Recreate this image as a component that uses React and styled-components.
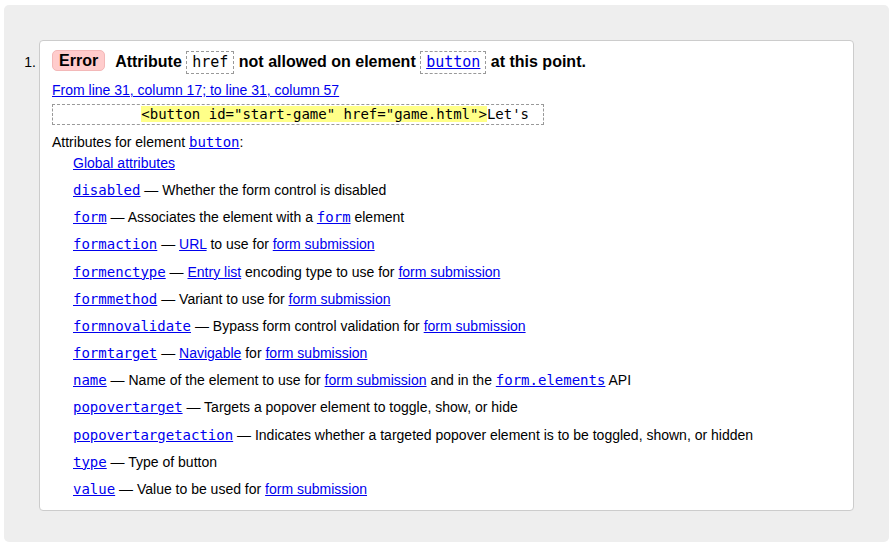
import React from 'react'
import styled, { createGlobalStyle } from 'styled-components'

const Global = createGlobalStyle`
  body {
    margin: 0;
    background: #fff;
    font-family: "Liberation Sans", Arial, sans-serif;
    color: #000;
  }
`

const Panel = styled.div`
  margin: 5px 0 0 4px;
  width: 885px;
  height: 537px;
  box-sizing: border-box;
  background: #eee;
  border-radius: 5px;
  padding: 35px 35px 0 0;
  display: flex;
  align-items: flex-start;
`

const Marker = styled.div`
  width: 35px;
  flex: none;
  box-sizing: border-box;
  padding: 13px 3px 0 0;
  text-align: right;
  font-size: 14px;
  line-height: 18px;
`

const Card = styled.div`
  flex: 1;
  background: #fff;
  border: 1px solid #ccc;
  border-radius: 4px;
  padding: 9px 12px 12px 12px;
  display: flex;
  flex-direction: column;
`

const Heading = styled.div`
  font-size: 16px;
  font-weight: bold;
  line-height: 23px;
  white-space: nowrap;
`

const Badge = styled.span`
  display: inline-block;
  background: #fcc;
  border: 1px solid #f3b8b8;
  border-radius: 5px;
  padding: 0 6px;
  line-height: 19px;
  margin-right: 10px;
  vertical-align: 1px;
`

const Code = styled.code`
  font-family: "DejaVu Sans Mono", monospace;
  font-weight: normal;
  font-size: ${p => p.$size || 14}px;
`

const Boxed = styled(Code)`
  display: inline-block;
  border: 1px dashed #999;
  padding: 0 5px;
  line-height: 21px;
`

const Link = styled.a`
  color: #00e;
  text-decoration: underline;
`

const Location = styled(Link)`
  margin-top: 7px;
  font-size: 14px;
  line-height: 18px;
  align-self: flex-start;
`

const Extract = styled.pre`
  margin: 5px 0 0 0;
  align-self: flex-start;
  border: 1px dashed #999;
  padding: 0 14px 0 4px;
  font-family: "DejaVu Sans Mono", monospace;
  font-size: 14px;
  line-height: 19px;
`

const Mark = styled.mark`
  background: #ff8;
  color: #000;
`

const Attributes = styled.div`
  margin-top: 8px;
  font-size: 14px;
  line-height: 18px;
  display: flex;
  flex-direction: column;
  gap: 9.17px;
`

const Title = styled.div`
  margin-bottom: -6.2px;
`

const Item = styled.div`
  padding-left: 21px;
  white-space: nowrap;
`

const items = [
  ['disabled', ['Whether the form control is disabled']],
  ['form', ['Associates the element with a ', { code: 'form' }, ' element']],
  ['formaction', [{ link: 'URL' }, ' to use for ', { link: 'form submission' }]],
  ['formenctype', [{ link: 'Entry list' }, ' encoding type to use for ', { link: 'form submission' }]],
  ['formmethod', ['Variant to use for ', { link: 'form submission' }]],
  ['formnovalidate', ['Bypass form control validation for ', { link: 'form submission' }]],
  ['formtarget', [{ link: 'Navigable' }, ' for ', { link: 'form submission' }]],
  ['name', ['Name of the element to use for ', { link: 'form submission' }, ' and in the ', { code: 'form.elements' }, ' API']],
  ['popovertarget', ['Targets a popover element to toggle, show, or hide']],
  ['popovertargetaction', ['Indicates whether a targeted popover element is to be toggled, shown, or hidden']],
  ['type', ['Type of button']],
  ['value', ['Value to be used for ', { link: 'form submission' }]],
]

function Part({ part }) {
  if (typeof part === 'string') return part
  if (part.code) return <Link href="#"><Code>{part.code}</Code></Link>
  return <Link href="#">{part.link}</Link>
}

export default function App() {
  return (
    <>
      <Global />
      <Panel>
        <Marker>1.</Marker>
        <Card>
          <Heading>
            <Badge>Error</Badge>
            Attribute <Boxed $size={15}>href</Boxed> not allowed on element{' '}
            <Boxed $size={15}><Link href="#">button</Link></Boxed> at this point.
          </Heading>
          <Location href="#">From line 31, column 17; to line 31, column 57</Location>
          <Extract>{'          '}<Mark>{'<button id="start-game" href="game.html">'}</Mark>Let's</Extract>
          <Attributes>
            <Title>
              Attributes for element <Link href="#"><Code>button</Code></Link>:
            </Title>
            <Item><Link href="#">Global attributes</Link></Item>
            {items.map(([name, parts]) => (
              <Item key={name}>
                <Link href="#"><Code>{name}</Code></Link> — {parts.map((p, i) => <Part key={i} part={p} />)}
              </Item>
            ))}
          </Attributes>
        </Card>
      </Panel>
    </>
  )
}
